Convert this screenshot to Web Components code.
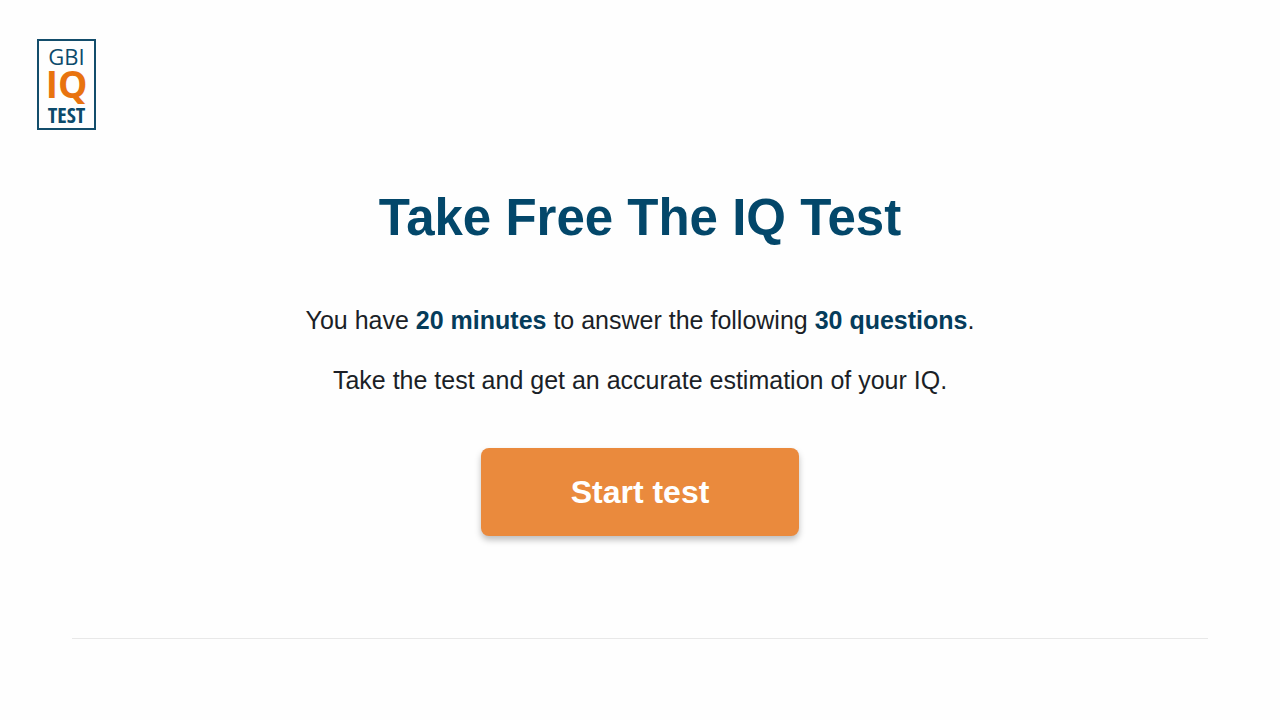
<!DOCTYPE html>
<html lang="en">
<head>
<meta charset="utf-8">
<meta name="viewport" content="width=device-width, initial-scale=1">
<title>GBI IQ Test</title>
<style>
  body { margin: 0; background: #fefefe; color: #1b1f27; font-family: "Liberation Sans", Arial, sans-serif; }
</style>
</head>
<body>
<iq-page>
  <iq-logo slot="header"></iq-logo>
  <iq-intro>
    <span slot="title">Take Free The IQ Test</span>
    <iq-line>You have <iq-mark>20 minutes</iq-mark> to answer the following <iq-mark>30 questions</iq-mark>.</iq-line>
    <iq-line>Take the test and get an accurate estimation of your IQ.</iq-line>
  </iq-intro>
  <iq-button>Start test</iq-button>
</iq-page>

<script>
const define = (name, html) => customElements.define(name, class extends HTMLElement {
  constructor() {
    super();
    this.attachShadow({ mode: "open" }).innerHTML = html;
  }
});

define("iq-page", `
  <style>
    :host { display: block; }
    header { padding: 39px 37px 0; }
    main { display: flex; flex-direction: column; align-items: center; padding: 56px 24px 0; }
    hr { margin: 102px 72px 0; border: 0; border-top: 1px solid #e8e8e8; }
  </style>
  <header><slot name="header"></slot></header>
  <main><slot></slot></main>
  <hr>`);

define("iq-logo", `
  <style>
    :host { display: block; width: fit-content; }
    a {
      box-sizing: border-box; display: flex; flex-direction: column; align-items: center;
      width: 59px; height: 91px; padding-top: 3px; border: 2px solid #134d6b;
      color: #0b4a6b; text-decoration: none; white-space: nowrap;
      font-family: "Open Sans", "Noto Sans", sans-serif;
    }
    .top { font-size: 22px; line-height: 24px; font-weight: 400; }
    .mid { font-size: 37px; line-height: 32px; font-weight: 700; color: #e8730f; }
    .low { font-family: "Open Sans Condensed", "Noto Sans ExtraCondensed", "Roboto Condensed", "Liberation Sans Narrow", "Open Sans", sans-serif;
           font-size: 22px; line-height: 28px; font-weight: 700; }
  </style>
  <a href="#"><span class="top">GBI</span><span class="mid">IQ</span><span class="low">TEST</span></a>`);

define("iq-intro", `
  <style>
    :host { display: block; text-align: center; }
    h1 { margin: 0 0 40px; font-size: 51px; line-height: 64px; font-weight: 700; color: #03476a; }
    div { display: flex; flex-direction: column; }
  </style>
  <h1><slot name="title"></slot></h1>
  <div><slot></slot></div>`);

define("iq-line", `
  <style>
    :host { display: block; }
    p { margin: 0; padding: 14px 0; font-size: 25px; line-height: 32px; }
  </style>
  <p><slot></slot></p>`);

define("iq-mark", `
  <style>
    :host { display: inline; }
    strong { font-weight: 700; color: #053c5b; }
  </style>
  <strong><slot></slot></strong>`);

define("iq-button", `
  <style>
    :host { display: block; margin-top: 38px; }
    button {
      width: 318px; max-width: 100%; padding: 24px; border: 0; border-radius: 8px;
      background: #ea8a3d; color: #fff; cursor: pointer;
      font-family: inherit; font-size: 32px; line-height: 40px; font-weight: 700;
      box-shadow: 0 4px 6px rgba(0, 0, 0, .25);
    }
  </style>
  <button type="button"><slot></slot></button>`);
</script>
</body>
</html>
